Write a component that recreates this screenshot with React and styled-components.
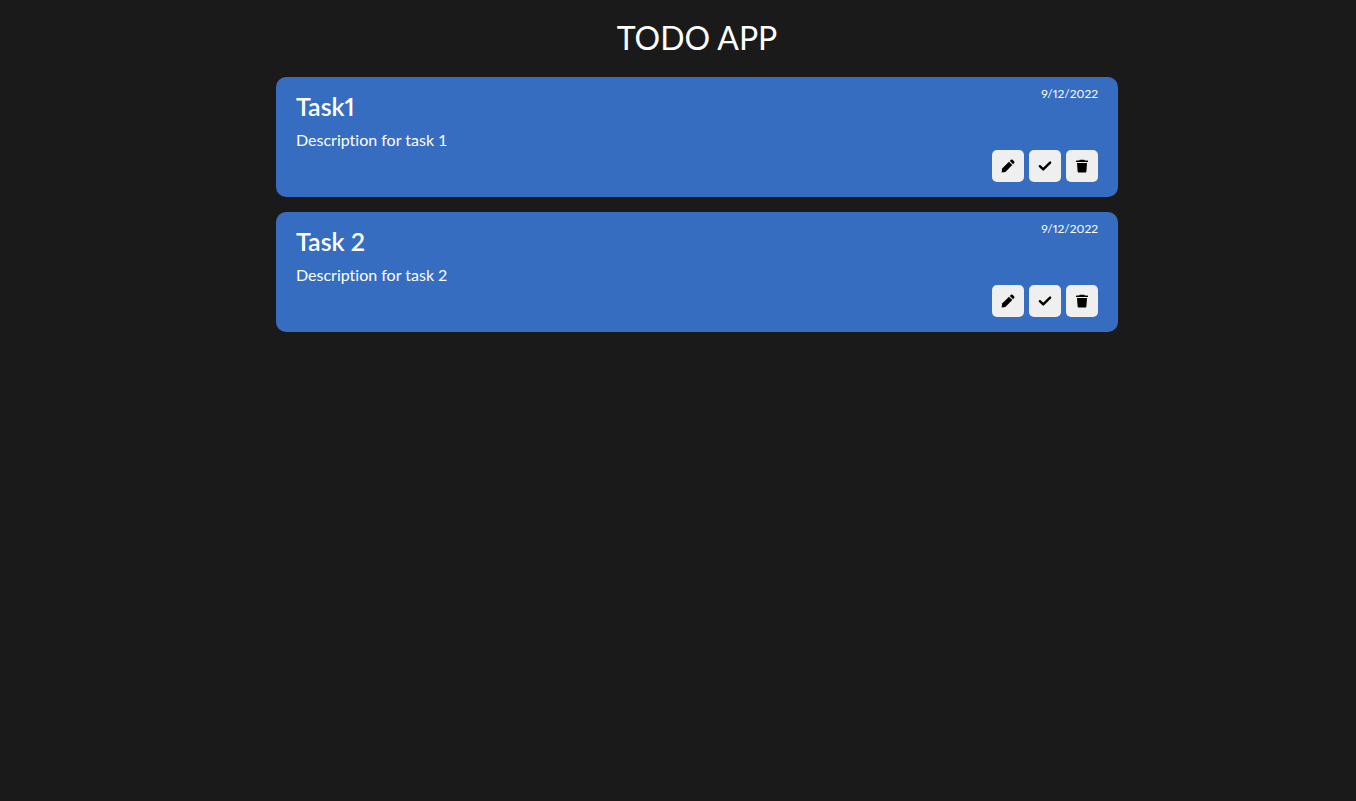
import React from "react";
import styled, { createGlobalStyle } from "styled-components";

const GlobalStyle = createGlobalStyle`
  *, *::before, *::after {
    box-sizing: border-box;
    margin: 0;
    padding: 0;
  }
  body {
    background: #1a1a1a;
    color: #fff;
    font-family: Lato, "Open Sans", sans-serif;
    font-variant-ligatures: none;
  }
`;

const Page = styled.main`
  display: flex;
  flex-direction: column;
  align-items: center;
  gap: 18px;
  padding: 16px 0 16px 38px;
`;

const Heading = styled.h1`
  font-size: 32px;
  line-height: 43px;
  font-weight: 400;
`;

const TaskList = styled.ul`
  display: flex;
  flex-direction: column;
  gap: 15px;
  width: 100%;
  max-width: 842px;
  list-style: none;
`;

const Card = styled.li`
  display: flex;
  justify-content: space-between;
  gap: 20px;
  min-height: 120px;
  padding: 8px 20px 15px;
  border-radius: 10px;
  background: #366dc1;
`;

const Content = styled.div`
  padding-top: 6px;
`;

const Title = styled.h2`
  font-size: 25px;
  line-height: 30px;
  font-weight: 600;
  font-variant-numeric: proportional-nums;
`;

const Description = styled.p`
  margin-top: 9px;
  font-size: 16px;
  line-height: 20px;
`;

const Side = styled.div`
  display: flex;
  flex-direction: column;
  align-items: flex-end;
  justify-content: space-between;
`;

const DueDate = styled.time`
  font-size: 12px;
  line-height: 18px;
  font-variant-numeric: proportional-nums;
`;

const Actions = styled.div`
  display: flex;
  gap: 5px;
`;

const IconButton = styled.button`
  display: flex;
  align-items: center;
  justify-content: center;
  width: 32px;
  height: 32px;
  border: 0;
  border-radius: 5px;
  background: #efefef;
  color: #000;
  cursor: pointer;
`;

const Icon = styled.svg.attrs({ viewBox: "0 0 14 14", "aria-hidden": true })`
  width: 14px;
  height: 14px;
  fill: currentColor;
`;

const PenIcon = () => (
  <Icon>
    <path d="M.6 13.4 1.1 9.6 8 2.7l3.3 3.3-6.9 6.9z" />
    <path d="M8.8 1.9 9.9.8q.9-.7 1.7 0l1.6 1.6q.7.8 0 1.7L12.1 5.2z" />
  </Icon>
);

const CheckIcon = () => (
  <Icon>
    <path
      d="M1.9 7.2 5.2 10.4 12.1 3.6"
      fill="none"
      stroke="currentColor"
      strokeWidth="2.4"
      strokeLinecap="round"
      strokeLinejoin="round"
    />
  </Icon>
);

const TrashIcon = () => (
  <Icon>
    <path d="M1.4 1.5h2.8L4.8.8h4.4l.6.7h2.8q.4 0 .4.4v1H1v-1q0-.4.4-.4z" />
    <path d="M2 3.9h10l-.6 8.5q-.1 1-1.1 1H3.7q-1 0-1.1-1z" />
  </Icon>
);

const tasks = [
  { id: 1, title: "Task1", description: "Description for task 1", date: "9/12/2022" },
  { id: 2, title: "Task 2", description: "Description for task 2", date: "9/12/2022" },
];

export default function App() {
  return (
    <>
      <GlobalStyle />
      <Page>
        <Heading>TODO APP</Heading>
        <TaskList>
          {tasks.map((task) => (
            <Card key={task.id}>
              <Content>
                <Title>{task.title}</Title>
                <Description>{task.description}</Description>
              </Content>
              <Side>
                <DueDate>{task.date}</DueDate>
                <Actions>
                  <IconButton type="button" aria-label="Edit task"><PenIcon /></IconButton>
                  <IconButton type="button" aria-label="Complete task"><CheckIcon /></IconButton>
                  <IconButton type="button" aria-label="Delete task"><TrashIcon /></IconButton>
                </Actions>
              </Side>
            </Card>
          ))}
        </TaskList>
      </Page>
    </>
  );
}
